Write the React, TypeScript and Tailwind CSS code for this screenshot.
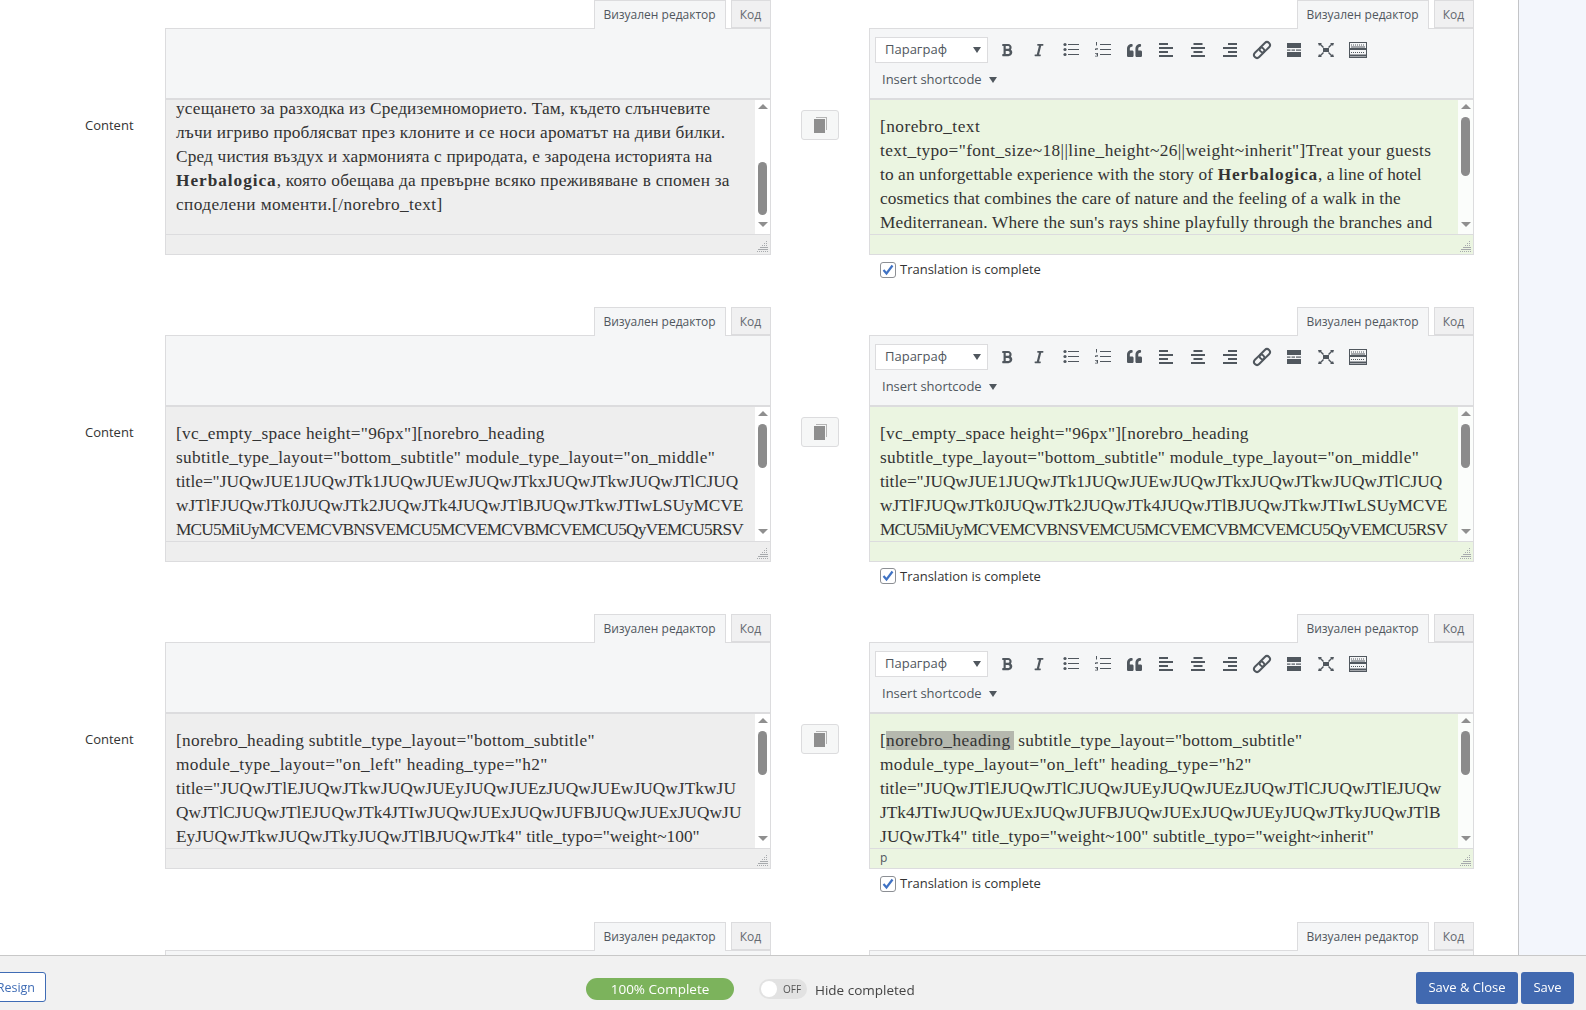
import React from 'react';
import { FaBold, FaItalic, FaQuoteLeft } from 'react-icons/fa';

const SANS = 'font-["Open_Sans",sans-serif]';

function Lines({ y }: { y: number[] }) {
  return (
    <>
      {y.map((v) => (
        <rect key={v} x="7" y={v} width="11" height="1" />
      ))}
    </>
  );
}

const Ul = () => (
  <svg width="20" height="20" viewBox="0 0 20 20" fill="#50575e">
    <Lines y={[4, 9, 14]} />
    <circle cx="4" cy="4.500" r="1.600" />
    <circle cx="4" cy="9.500" r="1.600" />
    <circle cx="4" cy="14.500" r="1.600" />
  </svg>
);

const Ol = () => (
  <svg width="20" height="20" viewBox="0 0 20 20" fill="#50575e">
    <Lines y={[4, 9, 14]} />
    <path d="M3 2h1v3.500H3zM2 8h3v.8H3.200V9.500H5v.5H2v-1h2v-.5H2zM2 13h3v3.500H2v-.7h2v-.7H3v-.6h1v-.7H2z" />
  </svg>
);

const Align = ({ side }: { side: 'left' | 'center' | 'right' }) => {
  const x = side === 'left' ? 3 : side === 'center' ? 5.500 : 8;
  return (
    <svg width="20" height="20" viewBox="0 0 20 20" fill="#50575e">
      <rect x={x} y="3" width="9" height="2" />
      <rect x="3" y="7" width="14" height="2" />
      <rect x={x} y="11" width="9" height="2" />
      <rect x="3" y="15" width="14" height="2" />
    </svg>
  );
};

const Chain = () => (
  <svg width="20" height="20" viewBox="0 0 20 20" fill="none" stroke="#50575e" strokeWidth="2">
    <g transform="rotate(-45 10 10)">
      <rect x="0" y="7" width="12" height="6" rx="3" />
      <rect x="8" y="7" width="12" height="6" rx="3" />
    </g>
  </svg>
);

const ReadMore = () => (
  <svg width="20" height="20" viewBox="0 0 20 20" fill="#50575e">
    <rect x="3" y="3" width="14" height="5" />
    <rect x="3" y="9.500" width="3.500" height="1.200" />
    <rect x="7.500" y="9.500" width="3.500" height="1.200" />
    <rect x="12" y="9.500" width="5" height="1.200" />
    <rect x="3" y="12" width="14" height="5" />
  </svg>
);

const Fullscreen = () => (
  <svg width="20" height="20" viewBox="0 0 20 20" fill="#50575e">
    <path d="M7 8h6v4H7z" />
    <path d="M2 3h4L5 4l3 3-1 1-3-3-1 1zM18 3h-4l1 1-3 3 1 1 3-3 1 1zM2 17h4l-1-1 3-3-1-1-3 3-1-1zM18 17h-4l1-1-3-3 1-1 3 3 1-1z" />
  </svg>
);

const Keyboard = () => (
  <svg width="20" height="20" viewBox="0 0 20 20" fill="none" stroke="#50575e">
    <rect x="1.500" y="2.500" width="17" height="15" />
    <path d="M3 5h14M3 12.500h14" strokeDasharray="1 1" />
    <path d="M2 9h16" strokeWidth="2" />
    <path d="M2 15.500h16" strokeWidth="2" />
    <path d="M3 7h14" strokeWidth="1" />
  </svg>
);

function Toolbar() {
  const buttons = [
    <FaBold size={14} color="#50575e" />,
    <FaItalic size={14} color="#50575e" />,
    <Ul />,
    <Ol />,
    <FaQuoteLeft size={15} color="#50575e" />,
    <Align side="left" />,
    <Align side="center" />,
    <Align side="right" />,
    <Chain />,
    <ReadMore />,
    <Fullscreen />,
    <Keyboard />,
  ];
  return (
    <div className="h-[71px] bg-[#f5f6f7] border-b-2 border-[#dcdcde] pl-[5px] pt-[8px]">
      <div className="flex items-center h-[26px]">
        <div className="w-[113px] h-[26px] bg-white border border-[#dcdcde] flex items-center justify-between pl-[9px] pr-[6px] text-[13px] text-[#50575e]">
          <span>Параграф</span>
          <span className="w-0 h-0 border-x-[4px] border-x-transparent border-t-[6px] border-t-[#50575e]" />
        </div>
        <div className="flex ml-[3px]">
          {buttons.map((b, i) => (
            <div key={i} className="w-[31.900px] h-[26px] flex items-center justify-center">
              {b}
            </div>
          ))}
        </div>
      </div>
      <div className="flex items-center h-[26px] mt-[4px] pl-[7px] text-[13px] text-[#50575e]">
        <span>Insert shortcode</span>
        <span className="ml-[7px] w-0 h-0 border-x-[4px] border-x-transparent border-t-[6px] border-t-[#50575e]" />
      </div>
    </div>
  );
}

function Scrollbar({ top, height, bg }: { top: number; height: number; bg: string }) {
  return (
    <div className={`relative w-[15px] shrink-0 ${bg}`}>
      <span className="absolute left-[3px] top-[4px] w-0 h-0 border-x-[5px] border-x-transparent border-b-[5px] border-b-[#8f8f8f]" />
      <div
        className="absolute left-[3px] w-[9px] rounded-[5px] bg-[#8b8b8b]"
        style={{ top, height }}
      />
      <span className="absolute left-[3px] bottom-[7px] w-0 h-0 border-x-[5px] border-x-transparent border-t-[5px] border-t-[#8f8f8f]" />
    </div>
  );
}

function Tabs() {
  return (
    <div className="flex justify-end h-[28px] relative z-10">
      <div className="w-[132px] h-[29px] bg-[#f5f6f7] border border-b-0 border-[#dcdcde] pr-[1px] text-[12px] text-[#50575e] flex items-center justify-center">
        Визуален редактор
      </div>
      <div className="w-[40px] ml-[5px] h-[28px] bg-[#f0f0f1] border border-[#dcdcde] pt-[2px] pr-[1px] text-[12px] text-[#646970] flex items-center justify-center">
        Код
      </div>
    </div>
  );
}

type EditorProps = {
  active?: boolean;
  lines: React.ReactNode[];
  thumbTop: number;
  thumbHeight: number;
  offset?: number;
  path?: string;
  width: string;
};

function Editor({ active, lines, thumbTop, thumbHeight, offset = 15, path, width }: EditorProps) {
  return (
    <div className={width}>
      <Tabs />
      <div className={`border border-[#dcdcde] ${active ? 'bg-[#ebf5e1]' : 'bg-[#eeeeee]'}`}>
        {active ? <Toolbar /> : <div className="h-[71px] bg-[#f5f6f7] border-b-2 border-[#dcdcde]" />}
        <div className="flex h-[134px]">
          <div
            className={`flex-1 overflow-hidden pl-[10px] text-[17.300px] leading-[24px] text-[#333333] font-["Liberation_Serif",serif] whitespace-nowrap ${active ? 'bg-[#ebf5e1]' : 'bg-[#eeeeee]'}`}
          >
            <div style={{ marginTop: offset }}>
              {lines.map((l, i) => (
                <div key={i} className="h-[24px]">
                  {l}
                </div>
              ))}
            </div>
          </div>
          <Scrollbar
            top={thumbTop}
            height={thumbHeight}
            bg={active ? 'bg-[#fbfdfb]' : 'bg-white'}
          />
        </div>
        <div className="relative h-[20px] border-t border-[#dcdcde] pl-[10px] text-[12px] leading-[18px] text-[#50575e]">
          {path}
          <svg className="absolute right-[2px] bottom-[2px]" width="12" height="12" viewBox="0 0 12 12" stroke="#a7aaad">
            <path d="M10.500 1v10M8.500 3v8M6.500 5v6M4.500 7v4M2.500 9v2" strokeDasharray="1 1" />
            <path d="M1 11.500h11M3 9.500h9M5 7.500h7" strokeDasharray="1 1" />
          </svg>
        </div>
      </div>
    </div>
  );
}

function CopyButton() {
  return (
    <div className="w-[38px] h-[30px] mt-[110px] mx-[30px] bg-[#f6f7f7] border border-[#dcdcde] rounded-[3px] flex items-center justify-center">
      <svg width="18" height="18" viewBox="0 0 18 18">
        <path d="M5 1h11v13h-1V2H5z" fill="#b5b5b5" />
        <rect x="3" y="3" width="11" height="14" fill="#8f8f8f" />
      </svg>
    </div>
  );
}

type RowData = {
  left: React.ReactNode[];
  right: React.ReactNode[];
  leftThumb: [number, number];
  rightThumb: [number, number];
  leftOffset?: number;
  rightOffset?: number;
  path?: string;
  height: string;
};

function Row({ left, right, leftThumb, rightThumb, leftOffset, rightOffset, path, height }: RowData) {
  return (
    <div className={`flex ${height} pl-[85px] ${SANS}`}>
      <div className="w-[80px] shrink-0 pt-[115px] text-[13px] leading-[20px] text-[#333]">Content</div>
      <Editor width="w-[606px]" lines={left} thumbTop={leftThumb[0]} thumbHeight={leftThumb[1]} offset={leftOffset} />
      <CopyButton />
      <div className="w-[605px]">
        <Editor active width="w-full" lines={right} thumbTop={rightThumb[0]} thumbHeight={rightThumb[1]} offset={rightOffset} path={path} />
        <label className="flex items-center gap-[3px] h-[20px] mt-[5px] pl-[11px] text-[13px] text-[#333]">
          <svg width="17" height="17" viewBox="0 0 17 17">
            <rect x=".5" y=".5" width="15" height="15" rx="2.500" fill="#fff" stroke="#8c8f94" />
            <path d="M3.500 8l3 3.500 6-8" fill="none" stroke="#3f72c4" strokeWidth="2.200" />
          </svg>
          Translation is complete
        </label>
      </div>
    </div>
  );
}

// fourth row: only the tabs and the top edge show above the footer
function CutRow() {
  return (
    <div className={`flex pl-[165px] ${SANS}`}>
      <div className="w-[606px]">
        <Tabs />
        <div className="h-[30px] bg-[#f5f6f7] border border-[#dcdcde]" />
      </div>
      <div className="w-[98px]" />
      <div className="w-[605px]">
        <Tabs />
        <div className="h-[30px] bg-[#f5f6f7] border border-[#dcdcde]" />
      </div>
    </div>
  );
}

const subtitleLine = <span className="tracking-[0.31px]">subtitle_type_layout="bottom_subtitle" module_type_layout="on_middle"</span>;
const vcLine = <span className="tracking-[0.29px]">[vc_empty_space height="96px"][norebro_heading</span>;
const encodedEnd = <span className="tracking-[-0.8px]">MCU5MiUyMCVEMCVBNSVEMCU5MCVEMCVBMCVEMCU5QyVEMCU5RSV</span>;

const rows: RowData[] = [
  {
    height: 'h-[306.500px]',
    left: [
      <span className="tracking-[0.17px]">усещането за разходка из Средиземноморието. Там, където слънчевите</span>,
      <span className="tracking-[0.2px]">лъчи игриво проблясват през клоните и се носи ароматът на диви билки.</span>,
      <span className="tracking-[0.165px]">Сред чистия въздух и хармонията с природата, е зародена историята на</span>,
      <span className="tracking-[0.24px]">
        <b className="tracking-[0.95px]">Herbalogica</b>, която обещава да превърне всяко преживяване в спомен за
      </span>,
      <span className="tracking-[0.4px]">споделени моменти.[/norebro_text]</span>,
    ],
    right: [
      <span className="tracking-[0.47px]">[norebro_text</span>,
      <span className="tracking-[0.37px]">text_typo="font_size~18||line_height~26||weight~inherit"]Treat your guests</span>,
      <span className="tracking-[0.12px]">
        to an unforgettable experience with the story of <b className="tracking-[0.93px]">Herbalogica</b>
        <span className="tracking-[-0.04px]">, a line of hotel</span>
      </span>,
      <span className="tracking-[0.11px]">cosmetics that combines the care of nature and the feeling of a walk in the</span>,
      <span className="tracking-[0.19px]">Mediterranean. Where the sun's rays shine playfully through the branches and</span>,
    ],
    leftThumb: [62, 53],
    rightThumb: [17, 59],
    leftOffset: -3,
  },
  {
    height: 'h-[307.500px]',
    left: [
      vcLine,
      subtitleLine,
      'title="JUQwJUE1JUQwJTk1JUQwJUEwJUQwJTkxJUQwJTkwJUQwJTlCJUQ',
      'wJTlFJUQwJTk0JUQwJTk2JUQwJTk4JUQwJTlBJUQwJTkwJTIwLSUyMCVE',
      encodedEnd,
    ],
    right: [
      vcLine,
      subtitleLine,
      'title="JUQwJUE1JUQwJTk1JUQwJUEwJUQwJTkxJUQwJTkwJUQwJTlCJUQ',
      'wJTlFJUQwJTk0JUQwJTk2JUQwJTk4JUQwJTlBJUQwJTkwJTIwLSUyMCVE',
      encodedEnd,
    ],
    leftThumb: [17, 44],
    rightThumb: [17, 44],
  },
  {
    height: 'h-[307.500px]',
    left: [
      <span className="tracking-[0.33px]">[norebro_heading subtitle_type_layout="bottom_subtitle"</span>,
      <span className="tracking-[0.4px]">module_type_layout="on_left" heading_type="h2"</span>,
      <span className="tracking-[0.08px]">title="JUQwJTlEJUQwJTkwJUQwJUEyJUQwJUEzJUQwJUEwJUQwJTkwJU</span>,
      <span className="tracking-[0.05px]">QwJTlCJUQwJTlEJUQwJTk4JTIwJUQwJUExJUQwJUFBJUQwJUExJUQwJU</span>,
      <span className="tracking-[0.05px]">EyJUQwJTkwJUQwJTkyJUQwJTlBJUQwJTk4" title_typo="weight~100"</span>,
    ],
    right: [
      <span className="tracking-[0.28px]">
        [<span className="bg-[#b5b8ae] pr-[3px] tracking-[0.5px]">norebro_heading</span> subtitle_type_layout="bottom_subtitle"
      </span>,
      <span className="tracking-[0.4px]">module_type_layout="on_left" heading_type="h2"</span>,
      'title="JUQwJTlEJUQwJTlCJUQwJUEyJUQwJUEzJUQwJTlCJUQwJTlEJUQw',
      <span className="tracking-[0.03px]">JTk4JTIwJUQwJUExJUQwJUFBJUQwJUExJUQwJUEyJUQwJTkyJUQwJTlB</span>,
      <span className="tracking-[0.18px]">JUQwJTk4" title_typo="weight~100" subtitle_typo="weight~inherit"</span>,
    ],
    leftThumb: [17, 44],
    rightThumb: [17, 44],
    path: 'p',
  },
];

function Footer() {
  return (
    <div className={`fixed left-0 right-0 bottom-0 h-[55px] bg-[#f1f1f1] border-t border-[#c8c8c8] ${SANS}`}>
      <div className="absolute left-[-30px] top-[16px] w-[76px] h-[30px] bg-white border border-[#3f6cb5] rounded-[3px] flex items-center justify-end pr-[10px] pt-[2px] text-[12.500px] text-[#3f6cb5]">
        Resign
      </div>
      <div className="absolute left-[586px] top-[22px] w-[148px] h-[22px] rounded-[11px] bg-[#7cb35c] flex items-center justify-center text-[13.500px] text-white">
        100% Complete
      </div>
      <div className="absolute left-[759px] top-[23px] w-[48px] h-[20px] rounded-[10px] bg-[#e2e2e2] flex items-center">
        <span className="w-[16px] h-[16px] ml-[2px] rounded-full bg-white" />
        <span className="ml-[6px] text-[10px] text-[#555]">OFF</span>
      </div>
      <div className="absolute left-[815px] top-[24px] text-[13.500px] leading-[20px] text-[#444]">Hide completed</div>
      <div className="absolute left-[1416px] top-[16px] flex gap-[3px] text-[13px] text-white">
        <div className="w-[102px] h-[32px] rounded-[3px] bg-[#4169b0] flex items-center justify-center">Save &amp; Close</div>
        <div className="w-[53px] h-[32px] rounded-[3px] bg-[#4169b0] flex items-center justify-center">Save</div>
      </div>
    </div>
  );
}

export default function App() {
  return (
    <div className="flex h-[1010px] overflow-hidden bg-[#f3f6fc]">
      <div className="w-[1519px] shrink-0 bg-white border-r border-[#c3c4c7] overflow-hidden">
        {rows.map((r, i) => (
          <Row key={i} {...r} />
        ))}
        <CutRow />
      </div>
      <div className="flex-1" />
      <Footer />
    </div>
  );
}
